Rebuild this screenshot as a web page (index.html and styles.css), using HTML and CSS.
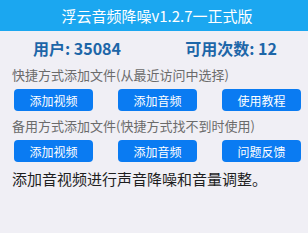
FILE: index.html
```html
<!DOCTYPE html>
<html lang="zh">
<head>
<meta charset="utf-8">
<link rel="stylesheet" href="styles.css">
</head>
<body>
<header class="topbar">浮云音频降噪v1.2.7一正式版</header>
<div class="stats">
  <div class="stat">用户: 35084</div>
  <div class="stat">可用次数: 12</div>
</div>
<div class="label label-first">快捷方式添加文件(从最近访问中选择)</div>
<div class="btn-row">
  <button class="btn">添加视频</button>
  <button class="btn">添加音频</button>
  <button class="btn">使用教程</button>
</div>
<div class="label">备用方式添加文件(快捷方式找不到时使用)</div>
<div class="btn-row">
  <button class="btn">添加视频</button>
  <button class="btn">添加音频</button>
  <button class="btn">问题反馈</button>
</div>
<p class="desc">添加音视频进行声音降噪和音量调整。</p>
</body>
</html>
```
FILE: styles.css
```css
html, body {
  margin: 0;
  padding: 0;
}
body {
  width: 308px;
  height: 233px;
  background: #f0eff5;
  font-family: "Noto Sans CJK SC", "Noto Sans", sans-serif;
  overflow: hidden;
}
.topbar {
  height: 31px;
  background: #1ba7f0;
  color: #ffffff;
  font-size: 15px;
  display: flex;
  align-items: center;
  justify-content: center;
  padding-left: 6px;
}
.stats {
  display: flex;
  margin-top: 7px;
  height: 20px;
}
.stat {
  flex: 1;
  text-align: center;
  font-size: 16px;
  line-height: 20px;
  font-weight: bold;
  color: #1d66a8;
}
.label {
  margin: 6px 0 0 12px;
  font-size: 13px;
  line-height: 18px;
  color: #6b6b6b;
}
.label-first {
  margin-top: 8px;
}
.btn-row {
  display: flex;
  gap: 25px;
  padding-left: 14px;
  margin-top: 5px;
}
.btn {
  width: 79px;
  height: 22px;
  border: none;
  border-radius: 4px;
  background: #0a7bf2;
  color: #ffffff;
  font-family: "Noto Sans CJK SC", "Noto Sans", sans-serif;
  font-size: 12px;
  padding: 0;
}
.desc {
  margin: 7px 0 0 12px;
  font-size: 15px;
  line-height: 20px;
  color: #1e1e1e;
}
```
